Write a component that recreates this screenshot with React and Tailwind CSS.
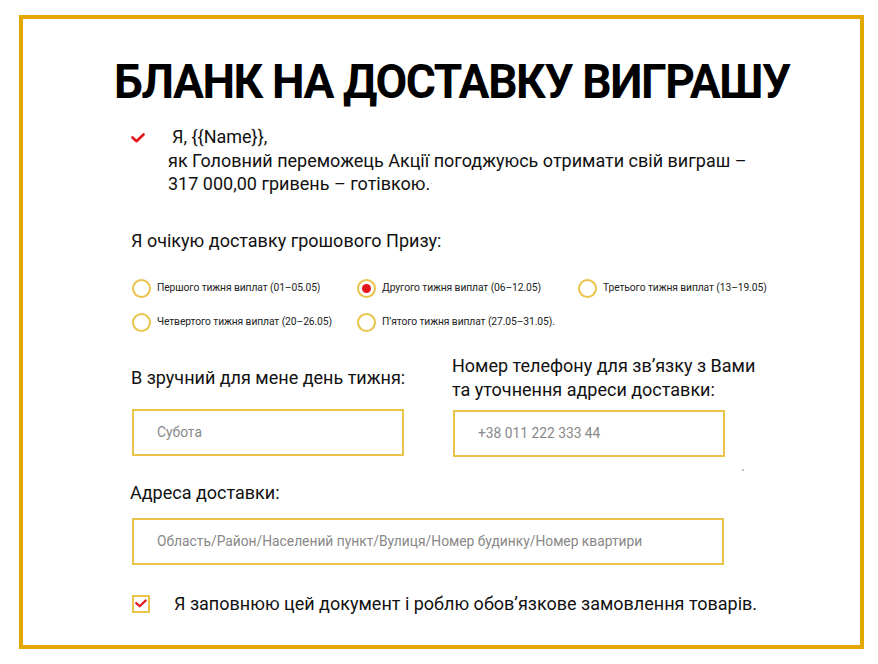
import React from "react";

const Radio = ({ checked, label }) => (
  <div className="flex items-center gap-[6px]">
    <span className="w-[19px] h-[19px] rounded-full border-2 border-[#E9C34A] flex items-center justify-center shrink-0">
      {checked && <span className="w-[9px] h-[9px] rounded-full bg-[#E3161B]" />}
    </span>
    <span className="text-[10.3px] text-[#222] tracking-[-0.1px]">{label}</span>
  </div>
);

const Check = ({ className }) => (
  <svg className={className} viewBox="0 0 14 10" width="14" height="10">
    <path d="M1.5 4.5 L5.5 8.2 L12.5 1.5" fill="none" stroke="#E3161B" strokeWidth="2.6" strokeLinecap="round" strokeLinejoin="round" />
  </svg>
);

const Field = ({ className, children }) => (
  <div className={`h-[47px] border-2 border-[#E9C34A] flex items-center pl-[23px] text-[13.8px] text-[#888] whitespace-nowrap ${className}`}>
    {children}
  </div>
);

export default function App() {
  return (
    <div className="w-[878px] h-[664px] bg-white pt-[15px] pl-[19px]" style={{ fontFamily: "Roboto, 'Noto Sans', sans-serif" }}>
      <div className="w-[845px] h-[634px] border-[4px] border-[#E2A800] relative">
        <h1 className="mt-[35px] ml-[91px] text-[49px] leading-[56px] font-bold text-black tracking-[-1.5px] whitespace-nowrap origin-left scale-x-[0.94]">
          БЛАНК НА ДОСТАВКУ ВИГРАШУ
        </h1>

        <div className="mt-[15px] ml-[108px] flex">
          <Check className="mt-[8px] shrink-0" />
          <div className="ml-[23px] text-[18px] leading-[23.5px] text-[#111]">
            <div className="ml-[4px]">Я, {"{{Name}}"},</div>
            <div>як Головний переможець Акції погоджуюсь отримати свій виграш –</div>
            <div>317 000,00 гривень – готівкою.<span className="text-[#999] text-[8px] align-top">·</span></div>
          </div>
        </div>

        <div className="mt-[33px] ml-[108px] text-[18px] leading-[24px] text-[#111]">
          Я очікую доставку грошового Призу:
        </div>

        <div className="mt-[26px] ml-[109px] grid grid-cols-[225px_221px_200px] gap-y-[15px]">
          <Radio label="Першого тижня виплат (01–05.05)" />
          <Radio checked label="Другого тижня виплат (06–12.05)" />
          <Radio label="Третього тижня виплат (13–19.05)" />
          <Radio label="Четвертого тижня виплат (20–26.05)" />
          <Radio label="П’ятого тижня виплат (27.05–31.05)." />
        </div>

        <div className="mt-[22px] ml-[108px] grid grid-cols-[321px_320px] items-center">
          <div className="text-[18px] leading-[24px] text-[#111] whitespace-nowrap">В зручний для мене день тижня:</div>
          <div className="text-[18px] leading-[24px] text-[#111] whitespace-nowrap">
            Номер телефону для зв’язку з Вами
            <br />
            та уточнення адреси доставки:
          </div>
          <Field className="mt-[7px] ml-[1px] w-[272px]">Субота</Field>
          <Field className="mt-[8px] ml-[1px] w-[272px]">+38 011 222 333 44</Field>
        </div>
        <div className="ml-[719px] mt-[12px] w-[2px] h-[2px] rounded-full bg-[#aaa]" />

        <div className="mt-[10px] ml-[107px] text-[18px] leading-[24px] text-[#111]">
          Адреса доставки:
        </div>
        <Field className="mt-[13px] ml-[109px] w-[592px]">
          Область/Район/Населений пункт/Вулиця/Номер будинку/Номер квартири
        </Field>

        <div className="mt-[27px] ml-[109px] flex items-center">
          <span className="w-[18px] h-[18px] border-2 border-[#E9C34A] flex items-center justify-center shrink-0">
            <Check className="w-[12px] h-[9px]" />
          </span>
          <span className="ml-[24px] text-[18px] leading-[24px] text-[#111]">
            Я заповнюю цей документ і роблю обов’язкове замовлення товарів.
          </span>
        </div>
      </div>
    </div>
  );
}
